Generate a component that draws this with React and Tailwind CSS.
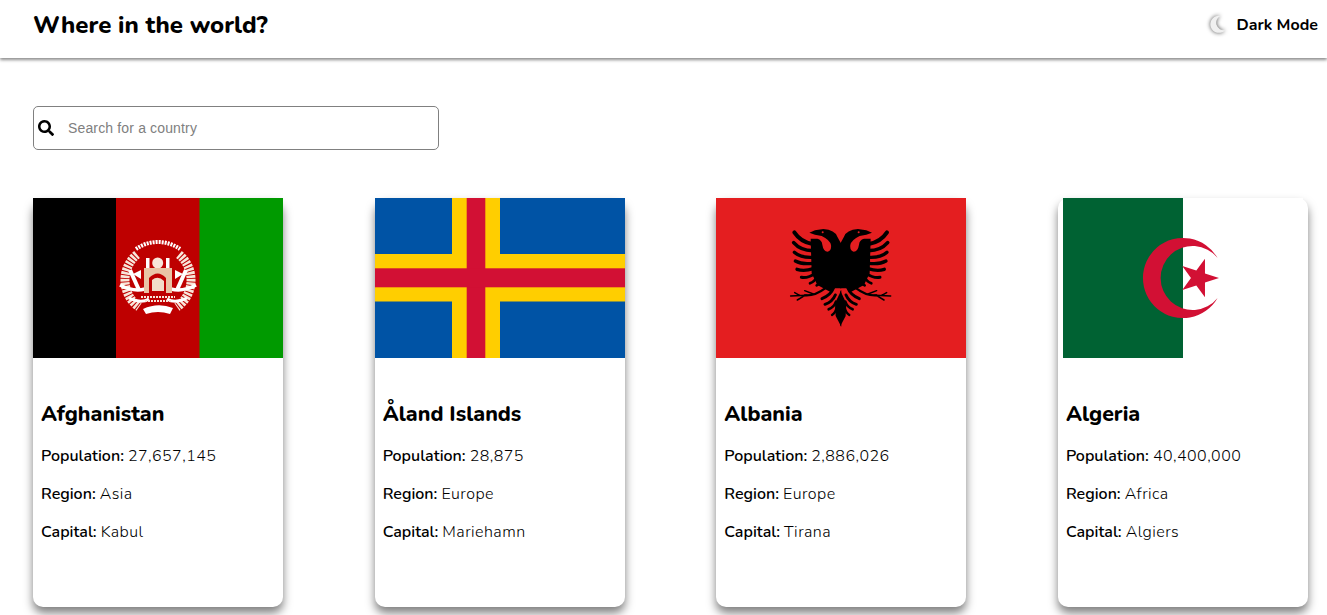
import React from 'react'
import { FaSearch } from 'react-icons/fa'

const countries = [
  { name: 'Afghanistan', population: '27,657,145', region: 'Asia', capital: 'Kabul', flag: 'af' },
  { name: 'Åland Islands', population: '28,875', region: 'Europe', capital: 'Mariehamn', flag: 'ax' },
  { name: 'Albania', population: '2,886,026', region: 'Europe', capital: 'Tirana', flag: 'al' },
  { name: 'Algeria', population: '40,400,000', region: 'Africa', capital: 'Algiers', flag: 'dz' },
]

const AfghanFlag = () => (
  <svg width="250" height="160" viewBox="0 0 250 160" className="block">
    <rect width="83.5" height="160" fill="#000" />
    <rect x="83" width="84" height="160" fill="#be0000" />
    <rect x="166.5" width="84" height="160" fill="#009a00" />
    {/* wreath */}
    <g fill="none" stroke="#fff">
      <path d="M103 51 A38 38 0 0 1 147 51" strokeWidth="4" strokeDasharray="2 1" />
      <path d="M104 56.5 A33 33 0 0 0 106 109" strokeWidth="9" strokeDasharray="2.5 1" stroke="#f8e6da" />
      <path d="M146 56.5 A33 33 0 0 1 144 109" strokeWidth="9" strokeDasharray="2.5 1" stroke="#f8e6da" />
      <path d="M87 87 Q100 94 112 91" strokeWidth="3.5" />
      <path d="M163 87 Q150 94 138 91" strokeWidth="3.5" />
      <path d="M97 72 L106 92" strokeWidth="4" />
      <path d="M153 72 L144 92" strokeWidth="4" />
      <path d="M96 100 Q108 106 116 101" strokeWidth="3" />
      <path d="M154 100 Q142 106 134 101" strokeWidth="3" />
    </g>
    {/* mosque */}
    <circle cx="124.7" cy="65" r="5.5" fill="#f8e6da" />
    <rect x="113" y="60" width="3.5" height="10" fill="#fff" />
    <rect x="133" y="60" width="3.5" height="10" fill="#fff" />
    <path d="M111 70 H139 V95 H111 Z" fill="#e9c4a6" />
    <path d="M116 95 V80 Q124.7 71 133 80 V95 Z" fill="#be0000" />
    <path d="M119 93 V82 Q125 77 131 83 V93 Z" fill="#f2dcc8" />
    <path d="M108 72 L100 76 L108 81 Z M142 72 L150 76 L142 81 Z" fill="#fff" />
    <path d="M108 99 H142 M112 103 H138" stroke="#f8e6da" strokeWidth="2" strokeDasharray="2 1" />
    <path d="M110 111 Q125 104 140 110 L137 116 Q125 112 113 116 Z" fill="#fff" />
  </svg>
)

const AlandFlag = () => (
  <svg width="250" height="160" viewBox="0 0 250 160" className="block">
    <rect width="250" height="160" fill="#0053a5" />
    <rect x="77" width="48" height="160" fill="#ffce00" />
    <rect y="56" width="250" height="47.5" fill="#ffce00" />
    <rect x="91.7" width="18.6" height="160" fill="#d21034" />
    <rect y="70.3" width="250" height="19" fill="#d21034" />
  </svg>
)

// left half of the eagle, drawn in 3x coords and mirrored for the right one
const EagleHalf = () => (
  <g>
    <path
      d="M92 56 L112 56 Q126 60 127 74 Q130 94 143 95 Q155 92 153 75 Q150 60 125 48 L105 44 L88 38 L105 31 L130 27 Q165 30 172 50 L184 72 L184 205 L165 205 L150 215 L112 195 L95 160 Z"
      fill="#000"
    />
    <circle cx="128" cy="37" r="3" fill="#e41e20" />
    <g fill="none" stroke="#000" strokeLinecap="round">
      <path d="M98 72 Q62 66 43 37" strokeWidth="12" />
      <path d="M98 92 Q62 92 41 68" strokeWidth="11" />
      <path d="M98 112 Q62 114 43 97" strokeWidth="10" />
      <path d="M98 130 Q65 134 46 123" strokeWidth="10" />
      <path d="M100 146 Q72 155 51 148" strokeWidth="10" />
      <path d="M105 160 Q85 175 64 172" strokeWidth="9" />
      <path d="M112 168 Q104 185 90 190" strokeWidth="8" />
      <path d="M128 170 Q125 188 110 196" strokeWidth="8" />
      <path d="M135 205 Q105 228 75 226" strokeWidth="7" />
      <path d="M80 226 L32 228 M75 226 L52 240 M60 227 L44 218 M100 222 L74 212" strokeWidth="4.5" />
      <path d="M160 205 Q152 226 126 236" strokeWidth="9" />
      <path d="M166 225 Q157 246 135 253" strokeWidth="9" />
      <path d="M168 245 Q162 262 146 268" strokeWidth="8" />
      <path d="M170 262 Q167 278 156 285" strokeWidth="7" />
    </g>
    <path d="M184 210 L165 250 L167 288 L184 320 Z" fill="#000" />
  </g>
)

const AlbaniaFlag = () => (
  <svg width="250" height="160" viewBox="0 0 250 160" className="block">
    <rect width="250" height="160" fill="#e41e20" />
    <g transform="translate(64 22) scale(0.3333)">
      <EagleHalf />
      <g transform="translate(364 0) scale(-1 1)">
        <EagleHalf />
      </g>
    </g>
  </svg>
)

const starPoints = (cx, cy, R) => {
  const pts = []
  for (let i = 0; i < 10; i++) {
    const r = i % 2 === 0 ? R : R * 0.382
    const a = (i * Math.PI) / 5
    pts.push(`${cx + r * Math.cos(a)},${cy + r * Math.sin(a)}`)
  }
  return pts.join(' ')
}

const AlgeriaFlag = () => (
  <svg width="240" height="160" viewBox="0 0 240 160" className="block">
    <rect width="240" height="160" fill="#fff" />
    <rect width="120" height="160" fill="#006233" />
    <path d="M154.6 60 A40 40 0 1 0 154.6 100 A32 32 0 1 1 154.6 60 Z" fill="#d21034" />
    <polygon points={starPoints(135.7, 80, 20.3)} fill="#d21034" />
  </svg>
)

const flags = { af: AfghanFlag, ax: AlandFlag, al: AlbaniaFlag, dz: AlgeriaFlag }

const Row = ({ label, value }) => (
  <p>
    <b className="font-semibold">{label}:</b> <span className="tracking-[0.45px]">{value}</span>
  </p>
)

const CountryCard = ({ country }) => {
  const Flag = flags[country.flag]
  return (
    <div className="w-[250px] h-[409px] bg-white rounded-[10px] shadow-[0_6px_10px_rgba(0,0,0,0.5)]">
      <div className="flex justify-center h-40">
        <Flag />
      </div>
      <div className="pl-2 pt-[43px]">
        <h2 className="text-[21.33px] leading-[26px] font-extrabold text-black">{country.name}</h2>
        <div className="mt-[17px] flex flex-col gap-[14px] text-[16px] leading-[24px] font-light text-black">
          <Row label="Population" value={country.population} />
          <Row label="Region" value={country.region} />
          <Row label="Capital" value={country.capital} />
        </div>
      </div>
    </div>
  )
}

export default function App() {
  return (
    <div className="min-h-screen bg-white font-['Nunito','Lato',sans-serif] text-black pb-2">
      <header className="h-[58px] flex items-center justify-between pl-[33px] pr-[9px] bg-white shadow-[0_2px_3px_rgba(0,0,0,0.45)]">
        <h1 className="text-[24px] font-extrabold -mt-[9px]">Where in the world?</h1>
        <div className="flex items-center gap-[10px] -mt-[9px]">
          <svg width="17" height="19" viewBox="0 0 18 20" className="drop-shadow-[0_0_2px_rgba(0,0,0,0.7)]">
            <path d="M12 1 A9 9 0 1 0 17 16 A8 8 0 0 1 12 1 Z" fill="#f0f0f0" />
          </svg>
          <span className="text-[16px] font-bold">Dark Mode</span>
        </div>
      </header>

      <main className="pl-[33px] pr-[19px] pt-[48px]">
        <div className="relative w-[406px]">
          <FaSearch className="absolute left-[5px] top-[14px] text-[16px] text-black" />
          <input
            type="text"
            placeholder="Search for a country"
            className="w-full h-[44px] pl-[34px] border border-[#808080] rounded-[5px] font-['Liberation_Sans',sans-serif] text-[14px] tracking-[0.15px] placeholder:text-[#808080]"
          />
        </div>

        <div className="flex justify-between mt-[48px]">
          {countries.map((c) => (
            <CountryCard key={c.name} country={c} />
          ))}
        </div>
      </main>
    </div>
  )
}
